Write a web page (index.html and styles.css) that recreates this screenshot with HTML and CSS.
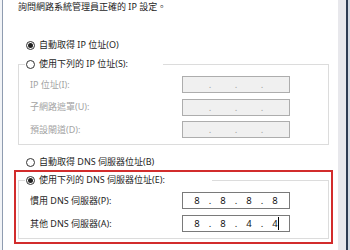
FILE: index.html
```html
<!DOCTYPE html>
<html lang="zh-Hant">
<head>
  <meta charset="UTF-8" />
  <meta name="viewport" content="width=device-width, initial-scale=1.0" />
  <title>Internet Protocol 第 4 版 (TCP/IPv4) 內容</title>
  <link rel="stylesheet" href="styles.css">
</head>
<body>
  <div class="window">
    <div class="edge-left"></div>

    <div class="panel">
      <p class="hint">詢問網路系統管理員正確的 IP 設定。</p>

      <div class="option first">
        <span class="radio checked"></span>自動取得 IP 位址(O)
      </div>

      <fieldset class="group">
        <legend class="option ip-legend"><span class="radio"></span>使用下列的 IP 位址(S):</legend>
        <div class="row disabled">
          <span class="label">IP 位址(I):</span>
          <div class="ip">
            <span class="oct"></span><span class="sep">.</span><span class="oct"></span><span class="sep">.</span><span class="oct"></span><span class="sep">.</span><span class="oct"></span>
          </div>
        </div>
        <div class="row disabled">
          <span class="label">子網路遮罩(U):</span>
          <div class="ip">
            <span class="oct"></span><span class="sep">.</span><span class="oct"></span><span class="sep">.</span><span class="oct"></span><span class="sep">.</span><span class="oct"></span>
          </div>
        </div>
        <div class="row disabled">
          <span class="label">預設閘道(D):</span>
          <div class="ip">
            <span class="oct"></span><span class="sep">.</span><span class="oct"></span><span class="sep">.</span><span class="oct"></span><span class="sep">.</span><span class="oct"></span>
          </div>
        </div>
      </fieldset>

      <div class="option auto-dns">
        <span class="radio"></span>自動取得 DNS 伺服器位址(B)
      </div>

      <div class="highlight">
        <fieldset class="group dns">
          <legend class="option dns-legend"><span class="radio checked"></span>使用下列的 DNS 伺服器位址(E):</legend>
          <div class="row">
            <span class="label">慣用 DNS 伺服器(P):</span>
            <div class="ip">
              <span class="oct">8</span><span class="sep">.</span><span class="oct">8</span><span class="sep">.</span><span class="oct">8</span><span class="sep">.</span><span class="oct">8</span>
            </div>
          </div>
          <div class="row">
            <span class="label">其他 DNS 伺服器(A):</span>
            <div class="ip">
              <span class="oct">8</span><span class="sep">.</span><span class="oct">8</span><span class="sep">.</span><span class="oct">4</span><span class="sep">.</span><span class="oct caret">4</span>
            </div>
          </div>
        </fieldset>
      </div>
    </div>

    <div class="edge-right"></div>
  </div>
</body>
</html>
```

FILE: styles.css
```css
body {
  margin: 0;
  background: #fff;
  font-family: "Noto Sans", "Noto Sans CJK TC", sans-serif;
  font-size: 9px;
  color: #1e1e1e;
  overflow: hidden;
}
.window {
  display: flex;
  width: 350px;
  height: 250px;
  background: #d3d9e2;
}
.edge-left {
  width: 2px;
  background: #f2f4f7;
  border-right: 1px solid #8f9cb0;
}
.panel {
  width: 320px;
  padding-left: 15px;
  background: #fff;
}
.edge-right {
  width: 8px;
  background: #e8e8ec;
  border-right: 2px solid #2e3c52;
}
.hint {
  margin: 0;
  line-height: 14px;
}
.option {
  display: flex;
  align-items: center;
  line-height: 14px;
  padding-left: 8px;
}
.first {
  margin-top: 24px;
}
.auto-dns {
  margin-top: 10px;
}
.radio {
  width: 9px;
  height: 9px;
  box-sizing: border-box;
  border: 1px solid #333;
  border-radius: 50%;
  background: #fff;
  display: inline-flex;
  align-items: center;
  justify-content: center;
  margin-right: 4px;
  flex: none;
}
.radio.checked::after {
  content: "";
  width: 5px;
  height: 5px;
  border-radius: 50%;
  background: #222;
}
.group {
  margin: 5px 0 0;
  padding: 5px 0 6px;
  border: 1px solid #dcdcdc;
  width: 311px;
  box-sizing: border-box;
  min-width: 0;
}
.group legend {
  margin-left: 6px;
  padding: 0 0 0 1px;
  box-sizing: border-box;
}
.ip-legend {
  width: 138px;
}
.dns-legend {
  width: 187px;
}
.row {
  display: flex;
  align-items: center;
  height: 17px;
  padding-left: 11px;
}
.row + .row {
  margin-top: 5.5px;
}
.dns .row + .row {
  margin-top: 6px;
}
.label {
  width: 152px;
  line-height: 14px;
}
.ip {
  width: 108px;
  height: 17px;
  box-sizing: border-box;
  border: 1px solid #7a7a7a;
  background: #fff;
  display: flex;
  align-items: center;
  padding-left: 4px;
  font-size: 9.5px;
  color: #111;
}
.disabled {
  color: #a3a3a3;
}
.disabled .ip {
  background: #f0f0f0;
  border-color: #adadad;
  color: #a3a3a3;
}
.oct {
  width: 20px;
  text-align: center;
  line-height: 13px;
  position: relative;
}
.sep {
  width: 6px;
  text-align: center;
  line-height: 13px;
}
.caret::after {
  content: "";
  position: absolute;
  top: 0;
  bottom: 0;
  left: 13px;
  width: 1px;
  background: #000;
}
.highlight {
  margin: 1px 0 0 -4px;
  border: 2px solid #d22c2c;
  padding: 1px 2px 3px 2px;
  width: 319px;
  box-sizing: border-box;
}
.highlight .group {
  margin-top: 0;
}
```
